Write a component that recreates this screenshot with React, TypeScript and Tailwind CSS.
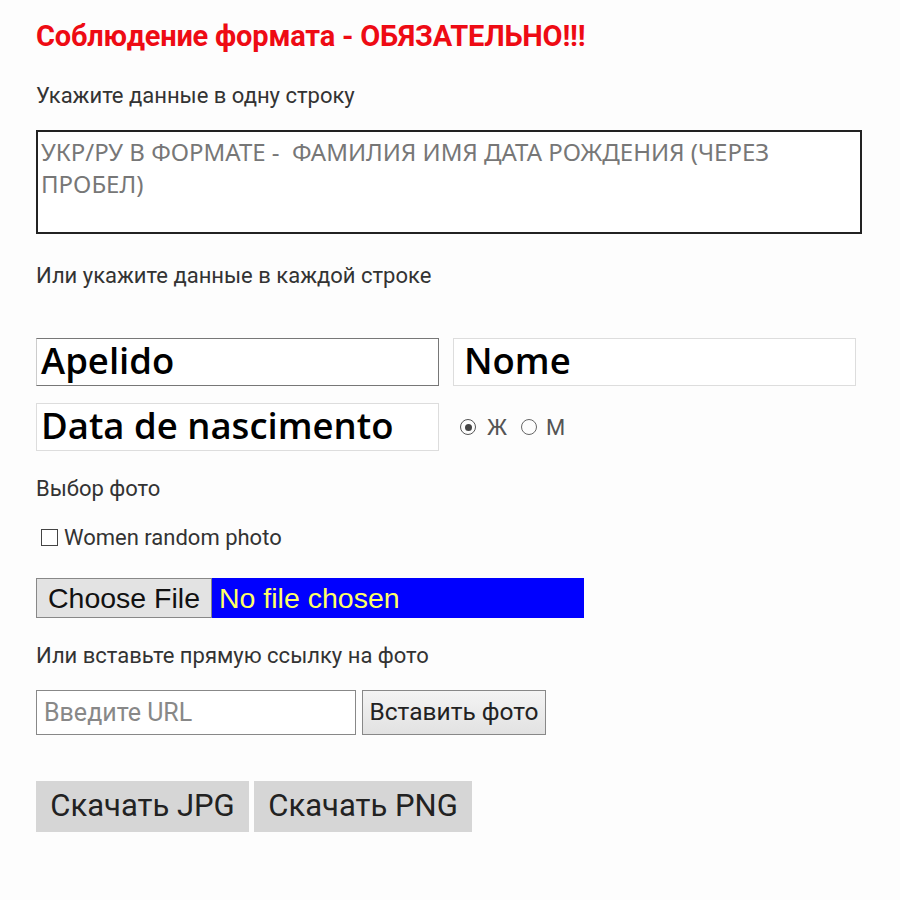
import React from "react";

export default function App() {
  return (
    <div className="w-[900px] h-[900px] bg-[#fdfdfd] pl-[36px] flex flex-col" style={{ fontFamily: "Roboto, 'Liberation Sans', sans-serif" }}>
      <div className="mt-[22px] h-[30px] flex items-center text-[29px] font-bold text-[#ee0b14] tracking-[-0.2px] whitespace-nowrap">
        Соблюдение формата - ОБЯЗАТЕЛЬНО!!!
      </div>
      <div className="mt-[31px] h-[24px] flex items-center text-[22px] text-[#333] whitespace-nowrap">Укажите данные в одну строку</div>
      <div className="mt-[23px] w-[826px] h-[104px] border-2 border-[#222] bg-white px-[3px] pt-[4px]">
        <div className="max-w-[750px] text-[24px] leading-[32px] text-[#777] tracking-[0px]" style={{ fontFamily: "'Noto Sans', sans-serif" }}>
          УКР/РУ В ФОРМАТЕ -&nbsp; ФАМИЛИЯ ИМЯ ДАТА РОЖДЕНИЯ (ЧЕРЕЗ ПРОБЕЛ)
        </div>
      </div>
      <div className="mt-[29px] h-[24px] flex items-center text-[22px] text-[#333] whitespace-nowrap">Или укажите данные в каждой строке</div>
      <div className="mt-[51px] flex gap-[14px]">
        <div className="w-[403px] h-[48px] bg-white border border-[#ccc] border-t-[#777] border-r-[#777] border-b-[#777] flex items-center pl-[4px] pb-[4px] text-[36.5px] leading-none font-semibold text-black" style={{ fontFamily: "'Open Sans', 'Noto Sans', sans-serif" }}>
          Apelido
        </div>
        <div className="w-[403px] h-[48px] bg-white border border-[#ddd] flex items-center pl-[10px] pb-[4px] text-[36.5px] leading-none font-semibold text-black" style={{ fontFamily: "'Open Sans', 'Noto Sans', sans-serif" }}>
          Nome
        </div>
      </div>
      <div className="mt-[17px] flex items-center">
        <div className="w-[403px] h-[48px] bg-white border border-[#ddd] flex items-center pl-[4px] pb-[4px] text-[36.5px] leading-none font-semibold text-black whitespace-nowrap" style={{ fontFamily: "'Open Sans', 'Noto Sans', sans-serif" }}>
          Data de nascimento
        </div>
        <div className="ml-[21px] flex items-center text-[22px] text-[#555]">
          <span className="w-[16px] h-[16px] rounded-full border-[1.5px] border-[#555] flex items-center justify-center">
            <span className="w-[7px] h-[7px] rounded-full bg-[#444]" />
          </span>
          <span className="ml-[11px]">Ж</span>
          <span className="ml-[14px] w-[16px] h-[16px] rounded-full border-[1.5px] border-[#666]" />
          <span className="ml-[9px]">М</span>
        </div>
      </div>
      <div className="mt-[25px] h-[24px] flex items-center text-[22px] text-[#333]">Выбор фото</div>
      <div className="mt-[25px] h-[24px] flex items-center text-[22px] text-[#333]">
        <span className="ml-[5px] w-[17px] h-[17px] border border-[#444] bg-white" />
        <span className="ml-[6px]">Women random photo</span>
      </div>
      <div className="mt-[29px] flex w-[548px] h-[40px]" style={{ fontFamily: "'Liberation Sans', Arial, sans-serif" }}>
        <div className="w-[176px] h-full bg-[#e3e3e3] border border-[#888] flex items-center justify-center text-[28.5px] text-[#111]">Choose File</div>
        <div className="flex-1 h-full bg-[#0000ff] flex items-center pl-[7px] text-[28.5px] text-[#ffff66]">No file chosen</div>
      </div>
      <div className="mt-[25px] h-[24px] flex items-center text-[22px] text-[#333] whitespace-nowrap">Или вставьте прямую ссылку на фото</div>
      <div className="mt-[23px] flex gap-[6px]">
        <div className="w-[320px] h-[45px] bg-white border border-[#888] flex items-center pl-[7px] text-[25px] text-[#888]">Введите URL</div>
        <div className="w-[184px] h-[45px] bg-gradient-to-b from-[#f4f4f4] to-[#e2e2e2] border border-[#888] flex items-center justify-center text-[24.5px] text-[#222] whitespace-nowrap">Вставить фото</div>
      </div>
      <div className="mt-[46px] flex gap-[5px]">
        <div className="w-[213px] h-[51px] bg-[#d6d6d6] flex items-center justify-center text-[31px] text-[#222] whitespace-nowrap">Скачать JPG</div>
        <div className="w-[218px] h-[51px] bg-[#d6d6d6] flex items-center justify-center text-[31px] text-[#222] whitespace-nowrap">Скачать PNG</div>
      </div>
    </div>
  );
}
